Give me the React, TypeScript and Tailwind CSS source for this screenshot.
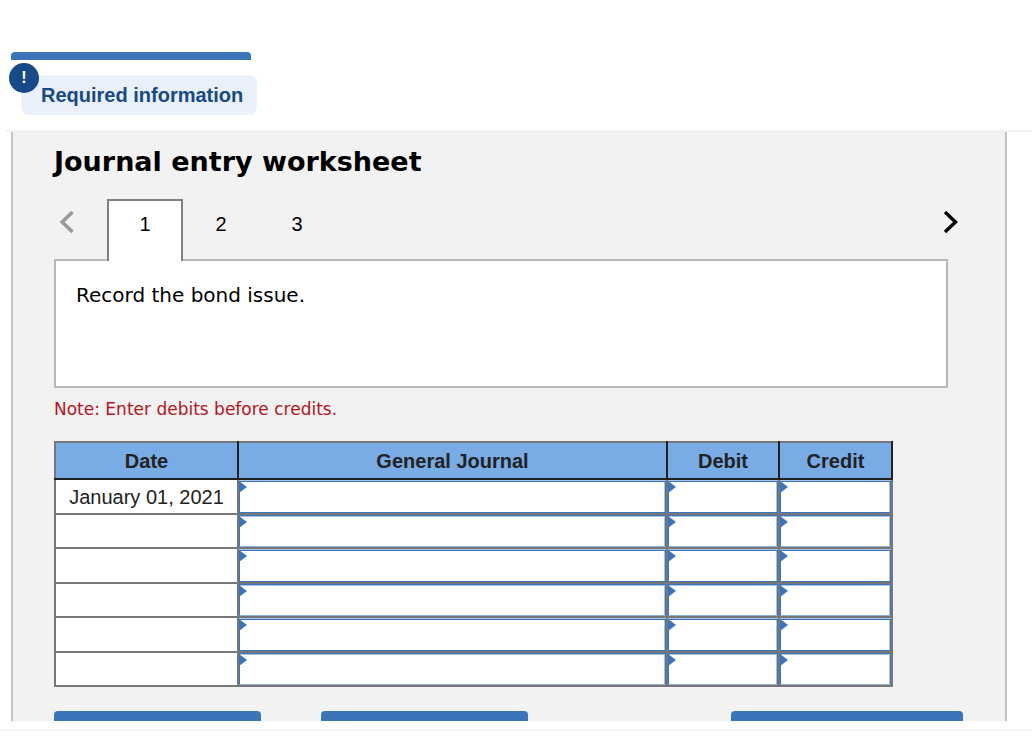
import React, { useState } from 'react';

interface JournalRow {
  date: string;
  height: string;
  field: string;
}

const tabs = [1, 2, 3];

// Rows alternate between the two entry field outlines
const oddField = 'mt-px border-[#3a75b9] shadow-[inset_-1px_0_0_#a9c4e4]';
const evenField = 'border-[#3a75b9] border-b-[#8fb2dd] shadow-[inset_-1px_1px_0_#a9c4e4]';

const rows: JournalRow[] = [
  { date: 'January 01, 2021', height: 'h-[35px]', field: oddField },
  { date: '', height: 'h-[34px]', field: evenField },
  { date: '', height: 'h-[35px]', field: oddField },
  { date: '', height: 'h-[34px]', field: evenField },
  { date: '', height: 'h-[35px]', field: oddField },
  { date: '', height: 'h-[34px]', field: evenField },
];

const columns = ['General Journal', 'Debit', 'Credit'];

const EntryCell: React.FC<{ label: string; field: string }> = ({ label, field }) => (
  <td className="border-2 border-[#777777] bg-[#a9c4e4] p-0 align-top">
    <div className="relative flow-root">
      <input
        aria-label={label}
        className={`block h-8 w-full border bg-white px-3 text-xl outline-none ${field}`}
        type="text"
      />
      <svg className="pointer-events-none absolute top-px left-0 h-3 w-2" viewBox="0 0 8 12" aria-hidden="true">
        <path d="M0 0L8 6L0 12Z" fill="#3a75b9" />
      </svg>
    </div>
  </td>
);

const JournalTable: React.FC = () => (
  <table className="w-full table-fixed border-collapse border-2 border-[#777777] text-xl leading-6 text-[#222222]">
    <colgroup>
      <col className="w-[183px]" />
      <col />
      <col className="w-[112px]" />
      <col className="w-[113px]" />
    </colgroup>
    <thead>
      <tr className="h-[37px] bg-[#79ace5]">
        {['Date', ...columns].map((name) => (
          <th key={name} scope="col" className="border-r-2 border-b-2 border-[#222222] p-0 font-bold">
            {name}
          </th>
        ))}
      </tr>
    </thead>
    <tbody>
      {rows.map((row, index) => (
        <tr key={index} className={row.height}>
          <td className="border-2 border-[#777777] bg-white p-0 text-center">{row.date}</td>
          {columns.map((name) => (
            <EntryCell key={name} label={`${name}, line ${index + 1}`} field={row.field} />
          ))}
        </tr>
      ))}
    </tbody>
  </table>
);

const App: React.FC = () => {
  const [active, setActive] = useState(1);

  return (
    <main className="bg-white pt-[52px] font-['Liberation_Sans',Arial,sans-serif]">
      <header>
        <div className="ml-[11px] h-2 w-60 rounded-t-sm bg-[#3a75b9]"></div>
        <div className="relative mt-[15px] ml-[21px] flex h-10 w-fit items-center rounded-lg bg-[#e9f0f9] pr-[14px] pl-5">
          <h1 className="text-xl leading-6 font-bold text-[#174a86]">Required information</h1>
          <span className="absolute -top-3 -left-3 flex size-[30px] items-center justify-center rounded-full bg-[#174a86] text-base font-bold text-white">
            !
          </span>
        </div>
      </header>

      <div className="mt-[15px] ml-[6px] h-[2px] bg-[#f1f1f1]"></div>

      <section className="mr-[25px] ml-[11px] border-x-2 border-[#c4c4c4] bg-[#f2f2f2] pr-[42px] pl-[41px]">
        <h2 className="pt-3 font-['DejaVu_Sans',Verdana,sans-serif] text-[27px] leading-9 font-bold text-black">
          Journal entry worksheet
        </h2>

        <div className="relative z-10 mt-[19px] flex h-[62px] text-xl text-black">
          <button type="button" aria-label="Previous" className="flex w-[53px] items-start pt-3 pl-[5px]">
            <svg className="h-[22px] w-4" viewBox="0 0 16 22" fill="none" stroke="#999999" strokeWidth="3.6">
              <path d="M13.5 1L3.2 11L13.5 21" />
            </svg>
          </button>
          {tabs.map((tab) => (
            <button
              key={tab}
              type="button"
              onClick={() => setActive(tab)}
              className={
                tab === active
                  ? 'w-[76px] border-2 border-b-0 border-[#808080] bg-white pb-[14px]'
                  : 'w-[76px] pb-3'
              }
            >
              {tab}
            </button>
          ))}
          <button type="button" aria-label="Next" className="ml-auto flex items-start pt-3 pr-1">
            <svg className="h-[22px] w-4" viewBox="0 0 16 22" fill="none" stroke="#000000" strokeWidth="3.4">
              <path d="M2 1L12.5 11L2 21" />
            </svg>
          </button>
        </div>

        <div className="-mt-[2px] mr-[15px] h-[129px] border-2 border-[#b8b8b8] bg-white px-5 py-5 font-['DejaVu_Sans',Verdana,sans-serif] text-xl leading-7 text-black">
          Record the bond issue.
        </div>

        <p className="mt-[9px] font-['DejaVu_Sans',Verdana,sans-serif] text-[17px] leading-6 text-[#b5121b]">
          Note: Enter debits before credits.
        </p>

        <div className="mt-5 mr-[70px]">
          <JournalTable />
        </div>

        <div className="mt-6 flex">
          <button type="button" aria-label="Record entry" className="h-[10px] w-[207px] rounded-t-sm bg-[#3a75b9]"></button>
          <button type="button" aria-label="Clear entry" className="ml-[60px] h-[10px] w-[207px] rounded-t-sm bg-[#3a75b9]"></button>
          <button type="button" aria-label="View general journal" className="ml-auto h-[10px] w-[232px] rounded-t-sm bg-[#3a75b9]"></button>
        </div>
      </section>

      <div className="mt-2 h-[2px] bg-[#f3f3f3]"></div>
    </main>
  );
};

export default App;
